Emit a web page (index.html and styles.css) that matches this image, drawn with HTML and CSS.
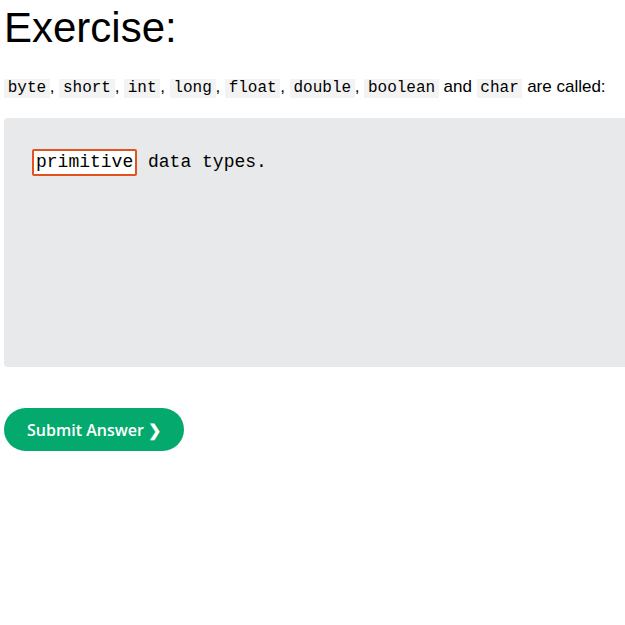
FILE: index.html
```html
<!DOCTYPE html>
<html>
<head>
<meta charset="utf-8">
<link rel="stylesheet" href="styles.css">
</head>
<body>
<div class="page">
  <h1 class="title">Exercise:</h1>
  <p class="question"><code class="kw">byte</code>, <code class="kw">short</code>, <code class="kw">int</code>, <code class="kw">long</code>, <code class="kw">float</code>, <code class="kw">double</code>, <code class="kw">boolean</code> and <code class="kw">char</code> are called:</p>
  <div class="codebox">
    <div class="codeline"><span class="answer">primitive</span> data types.</div>
  </div>
  <button class="submit">Submit Answer ❯</button>
</div>
</body>
</html>
```
FILE: styles.css
```css
html, body {
  margin: 0;
  padding: 0;
  background: #fff;
}
.page {
  padding: 0 4px;
  width: 640px;
  font-family: "Liberation Sans", Arial, sans-serif;
  color: #000;
}
.title {
  margin: 0;
  padding-top: 3px;
  font-size: 42px;
  font-weight: normal;
  line-height: 50px;
}
.question {
  margin: 24px 0 0;
  font-size: 17px;
  line-height: 20px;
}
.kw {
  font-family: "Liberation Mono", "Courier New", monospace;
  font-size: 16px;
  line-height: 19px;
  display: inline-block;
  background: #f3f3f3;
  padding: 0 3.7px;
}
.codebox {
  margin-top: 20px;
  background: #e7e9eb;
  border-radius: 4px;
  height: 249px;
  box-sizing: border-box;
  padding: 31px 28px;
  font-family: "Liberation Mono", "Courier New", monospace;
  font-size: 18px;
}
.codeline {
  line-height: 27px;
}
.answer {
  display: inline-block;
  background: #fff;
  border: 2px solid #e0531f;
  border-radius: 2px;
  padding: 0 2px;
  line-height: 23px;
}
.submit {
  margin-top: 41px;
  height: 43px;
  width: 180px;
  border: none;
  border-radius: 22px;
  background: #04aa6d;
  color: #fff;
  font-family: "Open Sans", sans-serif;
  font-weight: 600;
  font-size: 16px;
  padding: 0;
  display: block;
}
```
